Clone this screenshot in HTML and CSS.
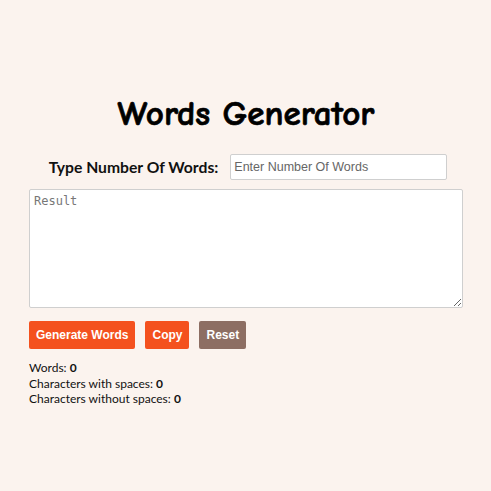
FILE: index.html
```html
<!DOCTYPE html>
<html lang="en">
<head>
<meta charset="utf-8">
<title>Words Generator</title>
<link rel="stylesheet" href="styles.css">
</head>
<body>
<main class="container">
  <h1 class="title">Words Generator</h1>
  <div class="input-row">
    <label class="label" for="count">Type Number Of Words:</label>
    <input class="count-input" id="count" type="text" placeholder="Enter Number Of Words">
  </div>
  <textarea class="result" placeholder="Result"></textarea>
  <div class="buttons">
    <button class="btn btn-orange">Generate Words</button>
    <button class="btn btn-orange">Copy</button>
    <button class="btn btn-brown">Reset</button>
  </div>
  <div class="stats">
    <div>Words: <b>0</b></div>
    <div>Characters with spaces: <b>0</b></div>
    <div>Characters without spaces: <b>0</b></div>
  </div>
</main>
</body>
</html>
```
FILE: styles.css
```css
html, body {
  margin: 0;
  padding: 0;
  background: #fbf3ee;
}
body {
  font-family: Lato, "Open Sans", sans-serif;
  color: #111;
}
.container {
  width: 434px;
  margin: 0 auto;
  padding-top: 91px;
  padding-left: 1px;
}
.title {
  margin: 0;
  text-align: center;
  font-family: "Comic Sans MS", "Comic Neue", cursive;
  font-size: 35px;
  font-weight: bold;
  line-height: 46px;
  color: #000;
  -webkit-text-stroke: 0.7px #000;
}
.input-row {
  display: flex;
  justify-content: center;
  align-items: center;
  gap: 12px;
  margin-top: 17px;
  padding-left: 4px;
}
.label {
  font-size: 15.7px;
  font-weight: bold;
}
.count-input {
  width: 217px;
  height: 26px;
  box-sizing: border-box;
  border: 1px solid #cfcfcf;
  border-radius: 2px;
  padding: 0 3px;
  font-family: "Liberation Sans", Arial, sans-serif;
  font-size: 12.5px;
  background: #fff;
}
.count-input::placeholder { color: #666; }
.result {
  display: block;
  width: 434px;
  height: 119px;
  box-sizing: border-box;
  margin-top: 9px;
  border: 1px solid #cfcfcf;
  border-radius: 2px;
  padding: 4px 4px;
  font-family: "DejaVu Sans Mono", "Liberation Mono", monospace;
  font-size: 12px;
  background: #fff;
}
.result::placeholder { color: #777; }
.buttons {
  display: flex;
  gap: 10px;
  margin-top: 13px;
}
.btn {
  height: 28px;
  border: none;
  border-radius: 2px;
  padding: 0 7px;
  font-family: "Liberation Sans", Arial, sans-serif;
  font-size: 12px;
  font-weight: bold;
  color: #fff;
}
.btn-orange { background: #f4511e; }
.btn-brown { background: #8d6e63; }
.stats {
  margin-top: 11px;
  font-size: 12px;
  line-height: 15.5px;
}
.stats b { font-weight: bold; }
```
